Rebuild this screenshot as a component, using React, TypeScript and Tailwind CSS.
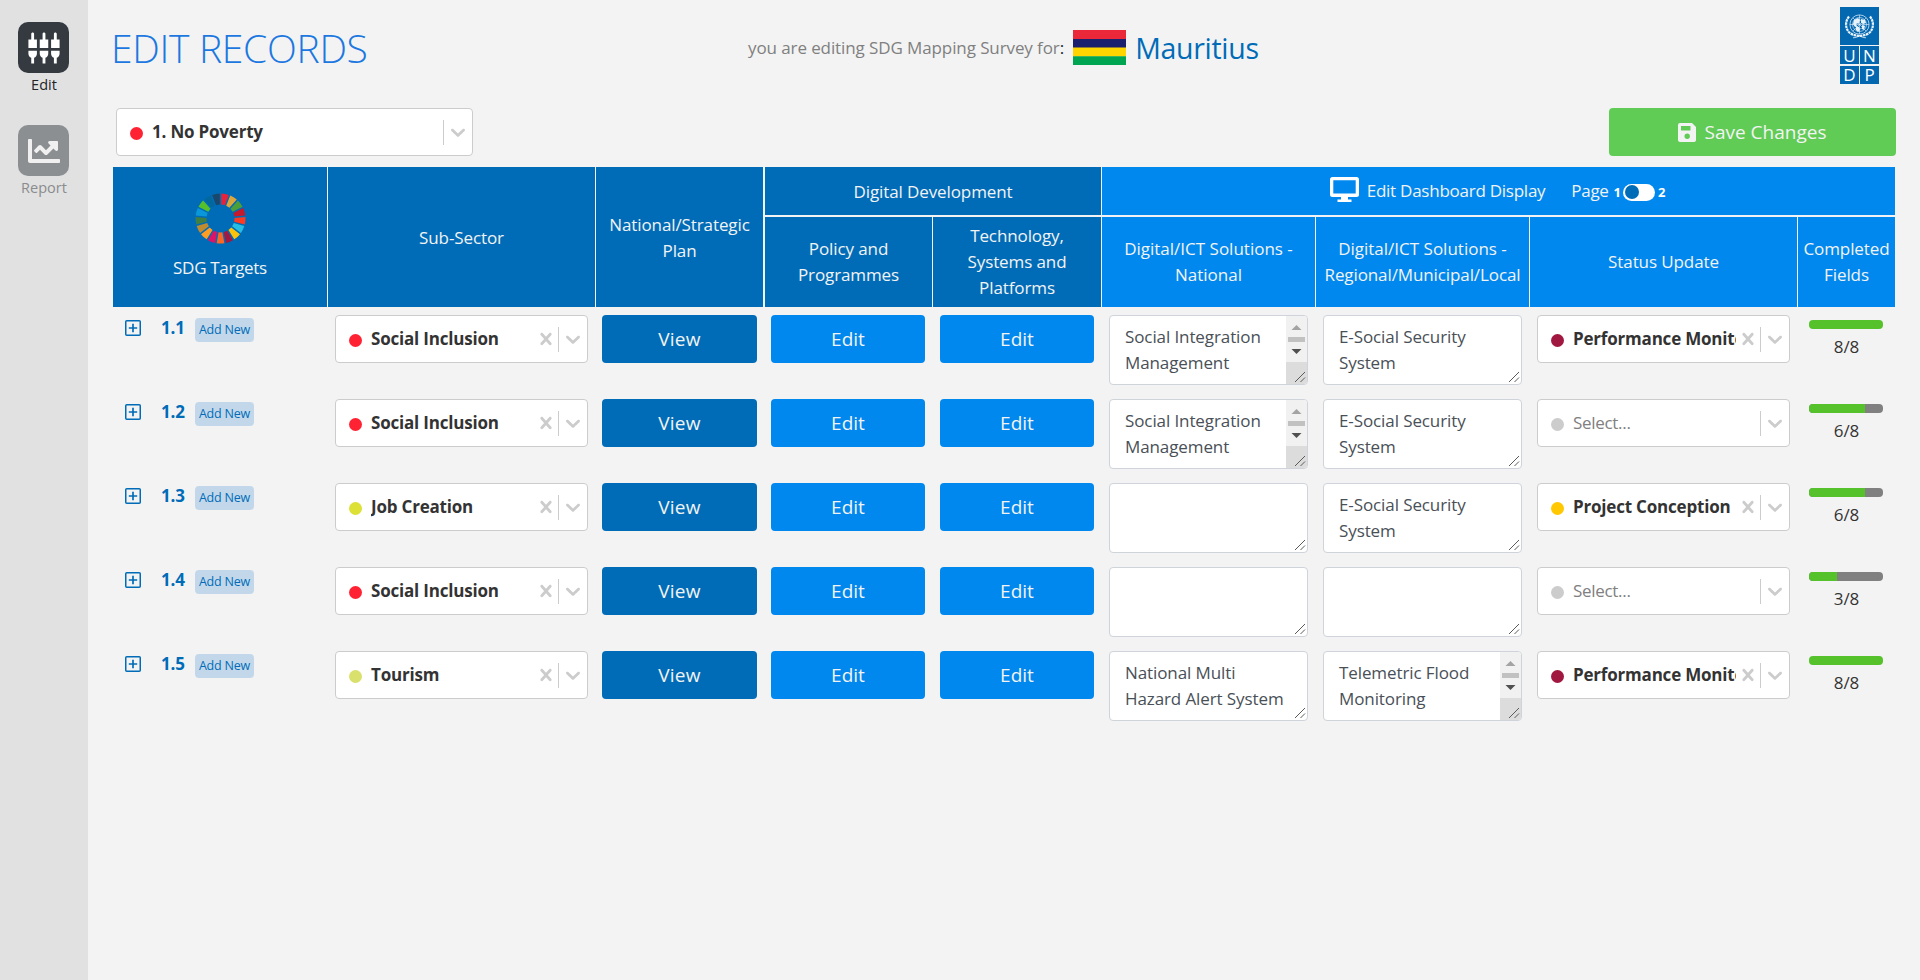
import type { ReactNode } from "react";
import { MdSettingsInputComponent } from "react-icons/md";
import { FaChartLine } from "react-icons/fa";

const COLS = "grid grid-cols-[215px_268px_169px_168px_169px_214px_214px_268px_97px]";

type Status = { label: string; color: string } | null;
type Row = {
  id: string;
  sector: string;
  sectorColor: string;
  national: string[];
  regional: string[];
  status: Status;
  done: number;
};

const SIM = ["Social Integration", "Management", "Information"];
const ESS = ["E-Social Security", "System"];

const rows: Row[] = [
  { id: "1.1", sector: "Social Inclusion", sectorColor: "#ff2233", national: SIM, regional: ESS, status: { label: "Performance Monitoring", color: "#a01840" }, done: 8 },
  { id: "1.2", sector: "Social Inclusion", sectorColor: "#ff2233", national: SIM, regional: ESS, status: null, done: 6 },
  { id: "1.3", sector: "Job Creation", sectorColor: "#dde035", national: [], regional: ESS, status: { label: "Project Conception", color: "#ffc800" }, done: 6 },
  { id: "1.4", sector: "Social Inclusion", sectorColor: "#ff2233", national: [], regional: [], status: null, done: 3 },
  { id: "1.5", sector: "Tourism", sectorColor: "#d9e06c", national: ["National Multi", "Hazard Alert System"], regional: ["Telemetric Flood", "Monitoring", "resources and"], status: { label: "Performance Monitoring", color: "#a01840" }, done: 8 },
];

const SDG_COLORS = [
  "#e5243b", "#dda63a", "#4c9f38", "#c5192d", "#ff3a21", "#26bde2", "#fcc30b", "#a21942", "#fd6925",
  "#dd1367", "#fd9d24", "#bf8b2e", "#3f7e44", "#0a97d9", "#56c02b", "#00689d", "#19486a",
];

function SdgWheel() {
  const step = (Math.PI * 2) / 17;
  const pt = (r: number, a: number) => `${(25.5 + r * Math.sin(a)).toFixed(2)} ${(25.5 - r * Math.cos(a)).toFixed(2)}`;
  return (
    <svg width="51" height="51" viewBox="0 0 51 51">
      {SDG_COLORS.map((c, i) => {
        const a = i * step + 0.03;
        const b = (i + 1) * step - 0.03;
        return (
          <path
            key={c}
            fill={c}
            d={`M${pt(25, a)}A25 25 0 0 1 ${pt(25, b)}L${pt(14, b - 0.02)}A14 14 0 0 0 ${pt(14, a + 0.02)}Z`}
          />
        );
      })}
    </svg>
  );
}

function Undp() {
  const cell = "flex h-[18px] items-center justify-center bg-[#0468b1] text-[17px] leading-none text-white";
  return (
    <div className="grid w-[39px] grid-cols-[19px_19px] gap-x-px gap-y-[1.5px]">
      <div className="col-span-2 flex h-[37.5px] items-center justify-center bg-[#0468b1]">
        <svg width="31" height="26" viewBox="0 0 31 26" fill="none" stroke="#e8f2fa">
          <circle cx="15.5" cy="11.5" r="9.6" strokeWidth=".7" />
          <circle cx="15.5" cy="11.5" r="7" strokeWidth=".6" />
          <circle cx="15.5" cy="11.5" r="4.4" strokeWidth=".6" />
          <path d="M5.9 11.5H25M15.5 2v19M8.8 4.8l13.4 13.4M22.2 4.8L8.8 18.2" strokeWidth=".6" />
          <path d="M10 7l4-2 2 2-1 3-3 1 1 2-2 1-2-3zM17 6l4 1 1 3-3 1-2-1zM12 13l3 1 1 3-2 2-2-2zM18 12l3 1-1 4-2-1z" fill="#e8f2fa" stroke="none" />
          <path d="M5 3.500C1.200 8 1.200 14.500 4.500 18.600c2.600 3 6.300 3.900 11 4.400M26 3.500c3.800 4.500 3.800 11 .5 15.100-2.600 3-6.300 3.900-11 4.400" strokeWidth="2.200" strokeDasharray="2.600 .6" />
          <path d="M9 24.800c3-.2 5-1 6.500-2.200 1.500 1.200 3.500 2 6.500 2.200" strokeWidth=".8" />
        </svg>
      </div>
      <div className={cell}>U</div>
      <div className={cell}>N</div>
      <div className={cell}>D</div>
      <div className={cell}>P</div>
    </div>
  );
}

function Cross() {
  return (
    <svg width="24" height="24" viewBox="0 0 20 20" fill="#cccccc" className="shrink-0">
      <path d="M14.348 14.849c-0.469 0.469-1.229 0.469-1.697 0l-2.651-3.030-2.651 3.029c-0.469 0.469-1.229 0.469-1.697 0-0.469-0.469-0.469-1.229 0-1.697l2.758-3.150-2.759-3.152c-0.469-0.469-0.469-1.228 0-1.697s1.228-0.469 1.697 0l2.652 3.031 2.651-3.031c0.469-0.469 1.228-0.469 1.697 0s0.469 1.229 0 1.697l-2.758 3.152 2.758 3.150c0.469 0.469 0.469 1.229 0 1.698z" />
    </svg>
  );
}

function Chevron() {
  return (
    <svg width="24" height="24" viewBox="0 0 20 20" fill="#cccccc" className="shrink-0">
      <path d="M4.516 7.548c0.436-0.446 1.043-0.481 1.576 0l3.908 3.747 3.908-3.747c0.533-0.481 1.141-0.446 1.574 0 0.436 0.445 0.408 1.197 0 1.615-0.406 0.418-4.695 4.502-4.695 4.502-0.217 0.223-0.502 0.335-0.787 0.335s-0.570-0.112-0.789-0.335c0 0-4.287-4.084-4.695-4.502s-0.436-1.170 0-1.615z" />
    </svg>
  );
}

function Select({ value, color, clearable }: { value?: string; color: string; clearable?: boolean }) {
  return (
    <div className="flex h-12 w-full items-center rounded border border-[#cccccc] bg-white pr-[2px] pl-[13px]">
      <span className="mt-[2px] size-[13px] shrink-0 rounded-full" style={{ backgroundColor: color }} />
      <span
        className={
          value
            ? "ml-[9px] flex-1 overflow-hidden font-bold whitespace-nowrap tracking-[-0.2px] text-[#333333]"
            : "ml-[9px] flex-1 tracking-[-0.3px] text-[#808080]"
        }
      >
        {value ?? "Select..."}
      </span>
      {clearable && <Cross />}
      <span className="mr-[2px] h-[25px] w-px shrink-0 bg-[#cccccc]" />
      <Chevron />
    </div>
  );
}

function TextBox({ lines }: { lines: string[] }) {
  const scroll = lines.length > 2;
  return (
    <div className="relative h-[70px] overflow-hidden rounded border border-[#ced4da] bg-white pt-2 pl-[15px] tracking-[-0.1px] text-[#495057]">
      {lines.map((l, i) => (
        <div key={l} className={i === 2 ? "mt-px whitespace-nowrap" : "whitespace-nowrap"}>{l}</div>
      ))}
      <svg className="absolute right-0 bottom-0" width="21" height="68" viewBox="0 0 21 68" fill="none">
        {scroll && (
          <>
            <path d="M0 0h21v47H0z" fill="#f1f1f1" />
            <path d="M0 46h21v22H0z" fill="#dcdcdc" />
            <path d="M5.500 14l5-5 5 5z" fill="#a3a3a3" />
            <path d="M2 21h17v5H2z" fill="#c1c1c1" />
            <path d="M5.500 33h10l-5 5z" fill="#505050" />
          </>
        )}
        <path d="M9 66L19 56M14.500 66L19 61.500" stroke="#5a5a5a" strokeWidth="1" />
      </svg>
    </div>
  );
}

function Btn({ children, light }: { children: ReactNode; light?: boolean }) {
  return (
    <button
      className={
        light
          ? "flex h-12 w-full items-center justify-center rounded bg-[#0088ee] text-[19px] text-[#f3f3f3]"
          : "flex h-12 w-full items-center justify-center rounded bg-[#006cb8] text-[19px] tracking-[0.3px] text-[#f3f3f3]"
      }
    >
      {children}
    </button>
  );
}

function TableHead() {
  const dark = "flex items-center justify-center bg-[#006cb8] text-center";
  const light = "flex items-center justify-center bg-[#0088ee] text-center";
  return (
    <div className={`${COLS} h-[140px] grid-rows-[48px_90px] gap-y-[2px] tracking-[-0.1px] text-[#f3f3f3]`}>
      <div className={`${dark} row-span-2 mr-px flex-col pb-px`}>
        <SdgWheel />
        <div className="mt-[11px] tracking-[-0.3px]">SDG Targets</div>
      </div>
      <div className={`${dark} row-span-2 mr-px pt-px`}>Sub-Sector</div>
      <div className={`${dark} row-span-2 mr-[2px] pt-px`}>National/Strategic<br />Plan</div>
      <div className={`${dark} col-span-2 mr-px pt-px`}>Digital Development</div>
      <div className={`${light} col-span-4`}>
        <svg width="29" height="26" viewBox="0 0 29 26" className="mr-[8px] -mt-[3px]">
          <path fillRule="evenodd" fill="#ffffff" d="M2.500 0h24A2.500 2.500 0 0 1 29 2.500v15a2.500 2.500 0 0 1-2.500 2.500H18v2.500h3.500V25h-14v-2.500H11V20H2.500A2.500 2.500 0 0 1 0 17.500v-15A2.500 2.500 0 0 1 2.500 0zM3.300 3.200v13.300h22.400V3.200z" />
        </svg>
        <span className="tracking-[-0.25px]">Edit Dashboard Display</span>
        <span className="ml-[26px] tracking-[-0.3px]">Page</span>
        <span className="mt-px ml-[5px] text-[13px] font-bold text-white">1</span>
        <span className="mt-[2px] ml-[2px] flex h-[17px] w-[32px] items-center rounded-full bg-white pl-[2px]">
          <span className="size-[14px] rounded-full bg-[#006cb8]" />
        </span>
        <span className="mt-px mr-[2px] ml-[3px] text-[13px] font-bold text-white">2</span>
      </div>
      <div className={`${dark} mr-px`}>Policy and<br />Programmes</div>
      <div className={`${dark} mr-px`}>Technology,<br />Systems and<br />Platforms</div>
      <div className={`${light} mr-px tracking-normal`}>Digital/ICT Solutions -<br />National</div>
      <div className={`${light} mr-px`}><div><span className="tracking-normal">Digital/ICT Solutions -</span><br />Regional/Municipal/Local</div></div>
      <div className={`${light} mr-px`}>Status Update</div>
      <div className={light}>Completed<br />Fields</div>
    </div>
  );
}

function TableRow({ row }: { row: Row }) {
  const cell = "pl-[7px] pr-2";
  return (
    <div className={`${COLS} h-[84px] pt-2`}>
      <div className="flex items-start pl-3">
        <svg width="16" height="16" viewBox="0 0 16 16" fill="none" stroke="#006cb8" className="mt-[5px]">
          <rect x=".75" y=".75" width="14.500" height="14.500" rx="1" strokeWidth="1.500" />
          <path d="M3.800 8h8.400M8 3.800v8.400" strokeWidth="1.700" />
        </svg>
        <span className="ml-5 w-[34px] font-bold tracking-[-0.2px] text-[#006cb8]">{row.id}</span>
        <span className="mt-[3px] flex h-6 w-[59px] items-center justify-center rounded bg-[#c2d8ea] text-[12.5px] tracking-[-0.2px] text-[#006cb8]">
          Add New
        </span>
      </div>
      <div className={cell}><Select value={row.sector} color={row.sectorColor} clearable /></div>
      <div className="pr-2 pl-[6px]"><Btn>View</Btn></div>
      <div className="pr-2 pl-[6px]"><Btn light>Edit</Btn></div>
      <div className={cell}><Btn light>Edit</Btn></div>
      <div className={cell}><TextBox lines={row.national} /></div>
      <div className={cell}><TextBox lines={row.regional} /></div>
      <div className={cell}>
        <Select value={row.status?.label} color={row.status?.color ?? "#cccccc"} clearable={!!row.status} />
      </div>
      <div className="pt-[5px] pr-3 pl-[11px] text-center text-[#333333]">
        <div className="h-[9px] overflow-hidden rounded bg-[#808080]">
          <div className="h-full bg-[#55c12b]" style={{ width: `${(row.done / 8) * 100}%` }} />
        </div>
        <div className="mt-[5px] pl-px">{row.done}/8</div>
      </div>
    </div>
  );
}

export default function App() {
  return (
    <div className="flex h-[980px] bg-[#f3f3f3] font-['Open_Sans','Noto_Sans',sans-serif] text-[17px] leading-[26px]">
      <aside className="flex w-[88px] shrink-0 flex-col items-center bg-[#e1e1e1] pt-[22px] text-[14.5px] leading-[24px]">
        <div className="mr-px flex size-[51px] items-center justify-center rounded-[10px] bg-[#343a40] text-white">
          <MdSettingsInputComponent size={34} />
        </div>
        <div className="h-[52px] text-[#212529]">Edit</div>
        <div className="mr-px flex size-[51px] items-center justify-center rounded-[10px] bg-[#8b8f92] text-[#f0f0f0]">
          <FaChartLine size={32} />
        </div>
        <div className="text-[#8a8c8e]">Report</div>
      </aside>

      <main className="w-[1832px] pr-6 pl-[25px]">
        <header className="grid h-[108px] grid-cols-[635px_1fr_auto] pr-[17px]">
          <h1 className="-ml-[2px] pt-[22px] text-[39px] leading-[52px] font-light tracking-[-0.3px] text-[#1c78e0]">EDIT RECORDS</h1>
          <div className="flex h-[96px] items-center">
            <span className="text-[#808080]">
              <span className="tracking-[-0.1px]">you are editing SDG Mapping Survey for</span>
              <span className="text-[#212529]">:</span>
            </span>
            <svg width="53" height="35" viewBox="0 0 53 35" className="-mt-px ml-[9px]">
              <path fill="#ea2839" d="M0 0h53v9H0z" />
              <path fill="#1a206d" d="M0 9h53v9H0z" />
              <path fill="#ffd500" d="M0 17.500h53v9H0z" />
              <path fill="#00a551" d="M0 26.200h53V35H0z" />
            </svg>
            <span className="ml-[9px] text-[28.5px] leading-[40px] tracking-[-0.3px] text-[#006cb8]">Mauritius</span>
          </div>
          <div className="pt-[7px]"><Undp /></div>
        </header>

        <div className="flex h-[59px] items-start justify-between pl-[3px]">
          <div className="w-[357px]"><Select value="1. No Poverty" color="#ff2233" /></div>
          <button className="flex h-12 w-[287px] items-center justify-center rounded bg-[#60cc56] pr-px text-[19px] text-[#f3f3f3]">
            <svg width="18" height="19" viewBox="0 0 18 19" className="mr-[9px]">
              <path
                fillRule="evenodd"
                fill="#f3f3f3"
                d="M2 0h12l4 4v13a2 2 0 0 1-2 2H2a2 2 0 0 1-2-2V2A2 2 0 0 1 2 0zM3 3v4.500h9.500V3zM9.200 10.500a2.700 2.700 0 1 0 0 5.400a2.700 2.700 0 0 0 0-5.400z"
              />
            </svg>
            Save Changes
          </button>
        </div>

        <div className="w-[1782px]">
          <TableHead />
          {rows.map((r) => (
            <TableRow key={r.id} row={r} />
          ))}
        </div>
      </main>
    </div>
  );
}
